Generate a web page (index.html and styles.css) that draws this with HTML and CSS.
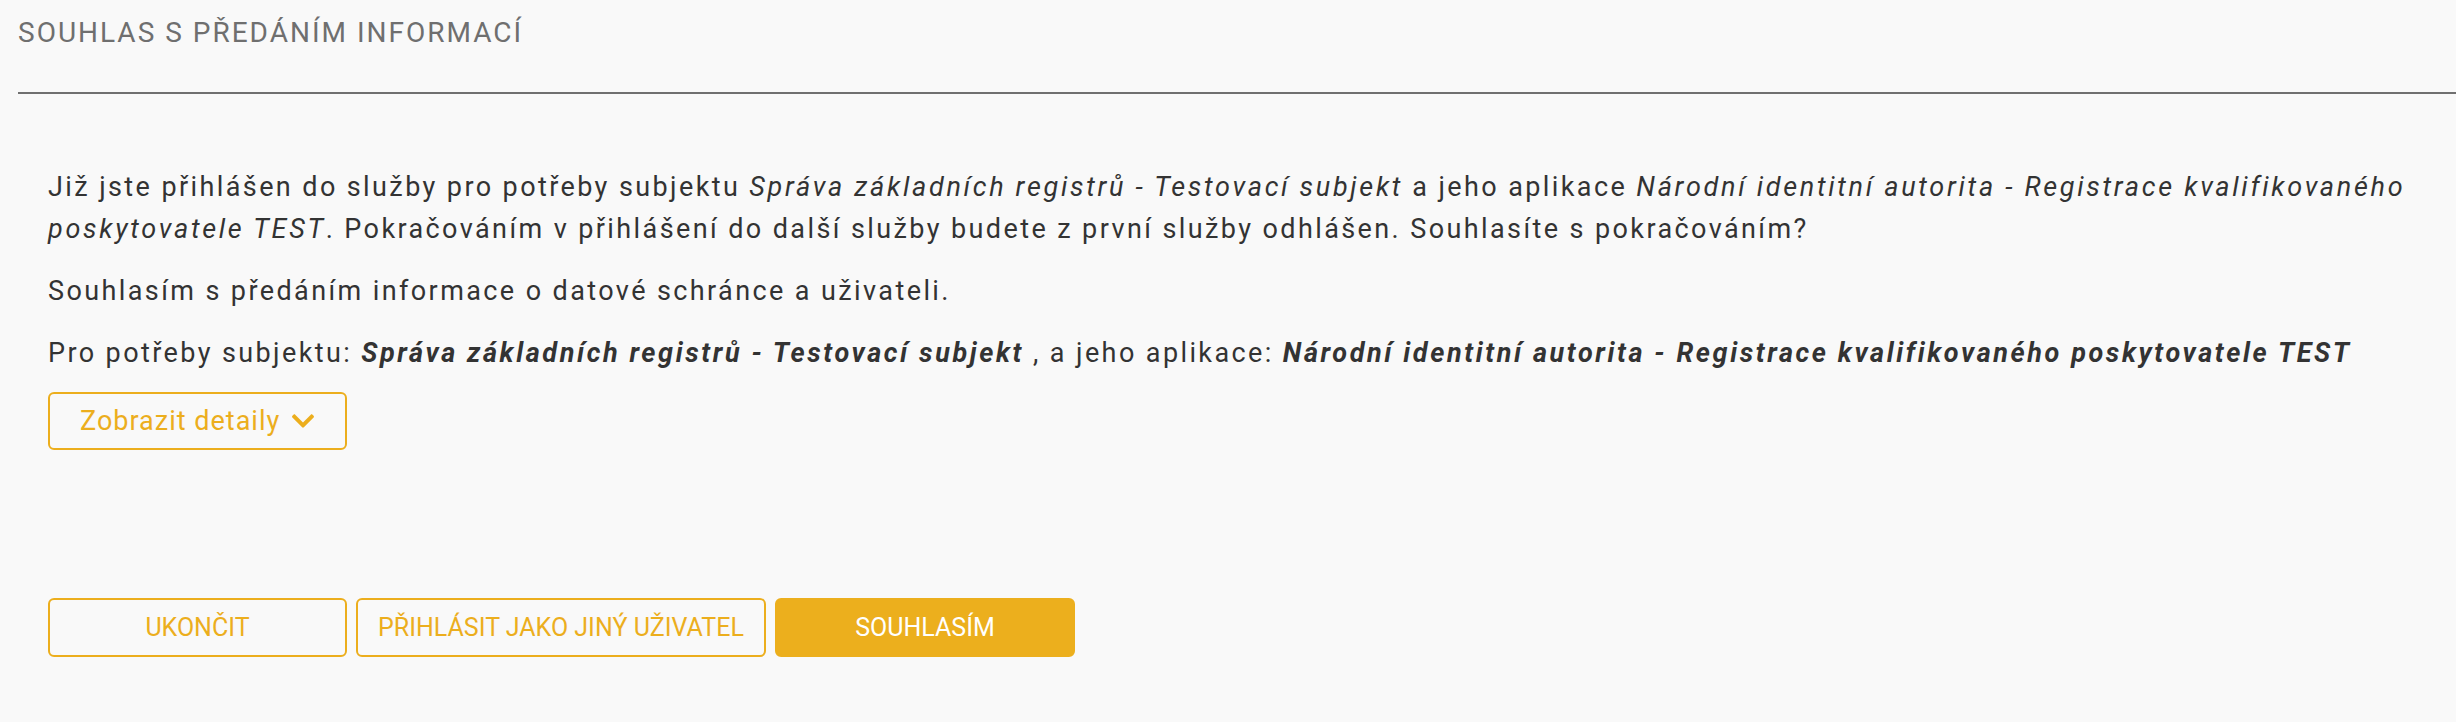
FILE: index.html
```html
<!DOCTYPE html>
<html lang="cs">
<head>
<meta charset="utf-8">
<title>Souhlas s předáním informací</title>
<link rel="stylesheet" href="styles.css">
</head>
<body>
<div class="page">
  <header class="title-bar">
    <h1 class="title">SOUHLAS S PŘEDÁNÍM INFORMACÍ</h1>
  </header>
  <div class="divider"></div>
  <main class="content">
    <p class="para">Již jste přihlášen do služby pro potřeby subjektu <em>Správa základních registrů - Testovací subjekt</em> a jeho aplikace <em>Národní identitní autorita - Registrace kvalifikovaného poskytovatele TEST</em>. Pokračováním v přihlášení do další služby budete z první služby odhlášen. Souhlasíte s pokračováním?</p>
    <p class="para">Souhlasím s předáním informace o datové schránce a uživateli.</p>
    <p class="para para-last">Pro potřeby subjektu: <strong class="bi">Správa základních registrů - Testovací subjekt</strong> , a jeho aplikace: <strong class="bi">Národní identitní autorita - Registrace kvalifikovaného poskytovatele TEST</strong></p>
    <button class="btn-details" type="button">Zobrazit detaily <svg class="chev" viewBox="5 120 438 272" aria-hidden="true"><path d="M207.029 381.476L12.686 187.132c-9.373-9.373-9.373-24.569 0-33.941l22.667-22.667c9.357-9.357 24.522-9.375 33.901-.04L224 284.505l154.745-154.021c9.379-9.335 24.544-9.317 33.901.04l22.667 22.667c9.373 9.373 9.373 24.569 0 33.941L240.971 381.476c-9.373 9.372-24.569 9.372-33.942 0z"/></svg></button>
    <div class="actions">
      <button class="btn btn-outline btn-end" type="button">UKONČIT</button>
      <button class="btn btn-outline btn-other" type="button">PŘIHLÁSIT JAKO JINÝ UŽIVATEL</button>
      <button class="btn btn-primary" type="button">SOUHLASÍM</button>
    </div>
  </main>
</div>
</body>
</html>
```

FILE: styles.css
```css
html, body {
  margin: 0;
  padding: 0;
  background: #f9f9f9;
}

body {
  font-family: Roboto, "Liberation Sans", sans-serif;
  color: #333333;
}

.page {
  min-height: 722px;
}

.title-bar {
  padding: 16px 0 0 18px;
}

.title {
  margin: 0;
  font-size: 28px;
  line-height: 34px;
  font-weight: 400;
  letter-spacing: 2px;
  color: #6f6f6f;
}

.divider {
  margin: 42px 0 0 18px;
  height: 2px;
  background: #707070;
}

.content {
  padding: 72px 10px 0 48px;
}

.para {
  margin: 0 0 20px 0;
  font-size: 27px;
  line-height: 42px;
  letter-spacing: 2.4px;
  color: #333333;
}

.para-last {
  margin-bottom: 18px;
}

.para em {
  font-style: italic;
  letter-spacing: 2.7px;
}

.bi {
  font-style: italic;
  font-weight: 700;
  letter-spacing: 2.6px;
}

.btn-details {
  display: flex;
  align-items: center;
  gap: 12px;
  box-sizing: border-box;
  width: 299px;
  height: 58px;
  margin-top: 18px;
  padding: 0 0 0 30px;
  border: 2px solid #ecae1d;
  border-radius: 6px;
  background: transparent;
  color: #ecae1d;
  font-family: Roboto, "Liberation Sans", sans-serif;
  font-size: 27px;
  letter-spacing: 1px;
  cursor: pointer;
}

.chev {
  width: 22px;
  height: 14px;
  fill: #ecae1d;
}

.actions {
  display: flex;
  gap: 9px;
  margin-top: 148px;
}

.btn {
  box-sizing: border-box;
  height: 59px;
  border-radius: 6px;
  font-family: Roboto, "Liberation Sans", sans-serif;
  font-size: 25px;
  font-weight: 400;
  cursor: pointer;
}

.btn-outline {
  border: 2px solid #ecae1d;
  background: transparent;
  color: #ecae1d;
}

.btn-end {
  width: 299px;
}

.btn-other {
  width: 410px;
}

.btn-primary {
  width: 300px;
  border: 2px solid #ecaf1d;
  background: #ecaf1d;
  color: #ffffff;
}
```
